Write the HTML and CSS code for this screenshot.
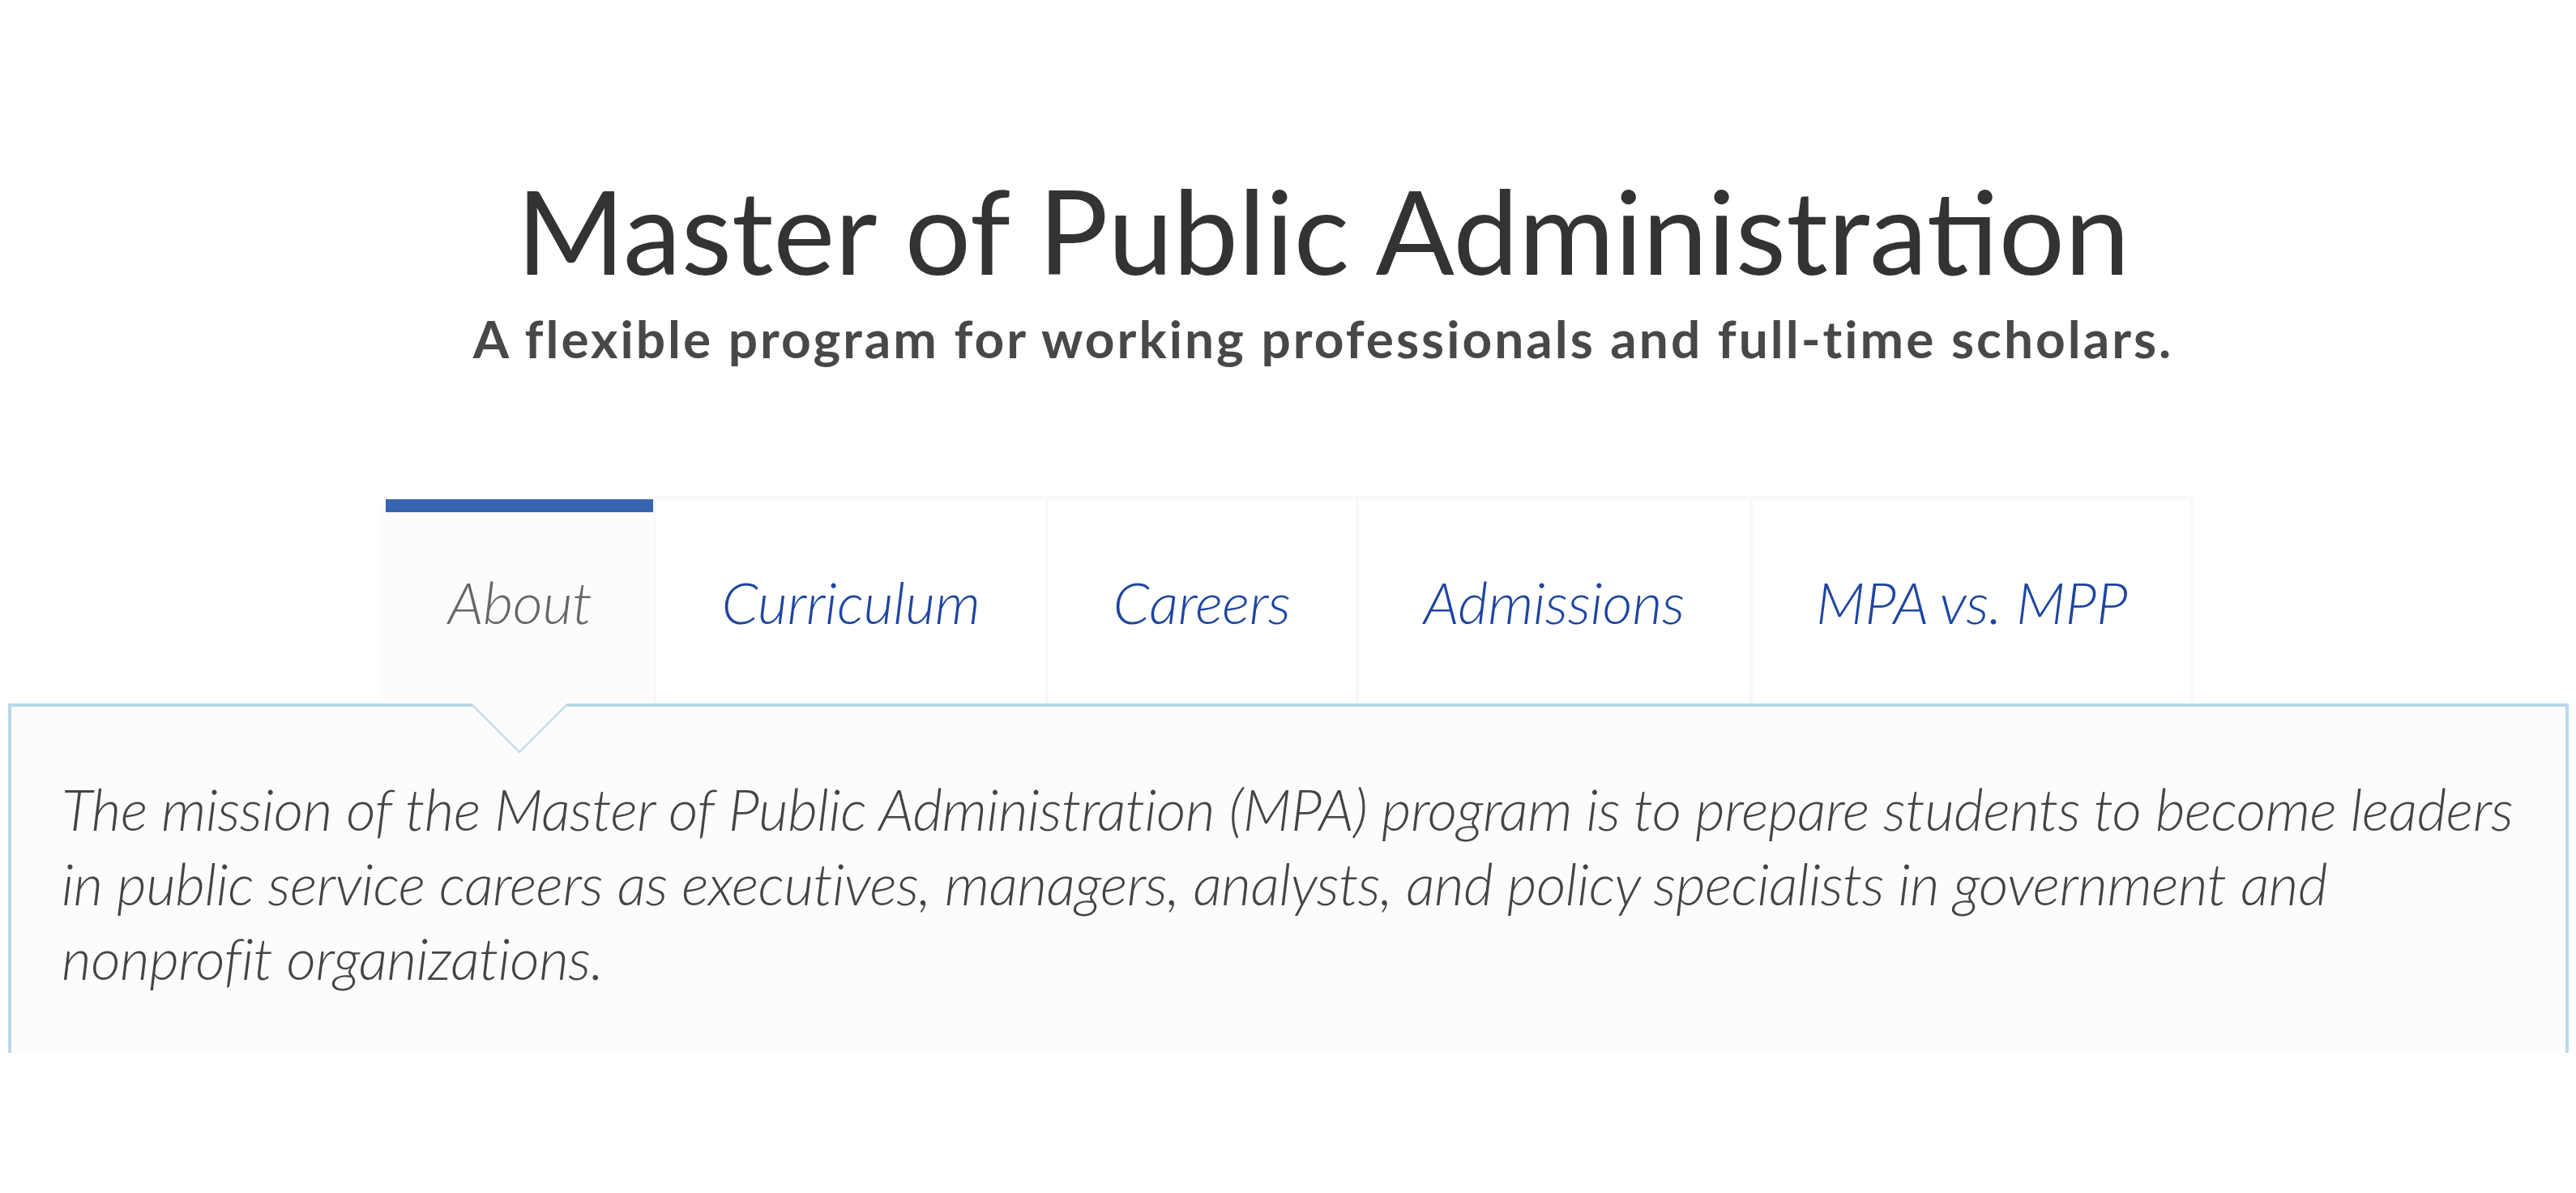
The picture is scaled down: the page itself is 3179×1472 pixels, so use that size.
FILE: index.html
```html
<!DOCTYPE html>
<html lang="en">
<head>
<meta charset="utf-8">
<title>Master of Public Administration</title>
<link rel="stylesheet" href="styles.css">
</head>
<body>
<header class="intro">
  <h1 class="title">Master of Public Administration</h1>
  <p class="subtitle">A flexible program for working professionals and full-time scholars.</p>
</header>
<nav class="tabs">
  <a class="tab tab-active" href="#about">About</a>
  <a class="tab" href="#curriculum">Curriculum</a>
  <a class="tab" href="#careers">Careers</a>
  <a class="tab" href="#admissions">Admissions</a>
  <a class="tab" href="#mpa-mpp">MPA vs. MPP</a>
</nav>
<section class="panel">
  <p class="mission">The mission of the Master of Public Administration (MPA) program is to prepare students to become leaders in public service careers as executives, managers, analysts, and policy specialists in government and nonprofit organizations.</p>
</section>
</body>
</html>
```
FILE: styles.css
```css
body {
  margin: 0;
  background: #fff;
  font-family: Lato, "Noto Sans", sans-serif;
}
.intro {
  padding: 197px 0 0 87px;
  text-align: center;
}
.title {
  margin: 0;
  font-size: 144px;
  font-weight: 400;
  line-height: 174px;
  color: #333;
}
.subtitle {
  margin: 8px 0 0;
  font-size: 64px;
  font-weight: 700;
  line-height: 77px;
  letter-spacing: 3px;
  color: #484848;
}
.tabs {
  display: flex;
  justify-content: center;
  margin-top: 156px;
}
.tab {
  display: block;
  padding: 83px 80px;
  border-top: 4px solid #f6f8fb;
  border-left: 4px solid #f6f8fb;
  background: #fff;
  font-size: 72px;
  font-style: italic;
  font-weight: 300;
  line-height: 86px;
  letter-spacing: -0.35px;
  color: #1e46a0;
  text-decoration: none;
  white-space: nowrap;
}
.tab:first-child {
  padding-left: 77px;
  padding-right: 76px;
}
.tab:last-child {
  padding-left: 78px;
  padding-right: 78px;
  border-right: 4px solid #f6f8fb;
}
.tab-active {
  position: relative;
  z-index: 1;
  color: #666;
  background: #fcfcfc;
  border-top-color: #fff;
  border-left-color: #fcfcfc;
  box-shadow: inset 0 16px 0 #3565ad;
}
.tab-active::after {
  content: "";
  position: absolute;
  left: 50%;
  bottom: -2px;
  box-sizing: border-box;
  width: 84px;
  height: 84px;
  background: #fcfcfc;
  border-right: 2px solid #b8d8ea;
  border-bottom: 2px solid #b8d8ea;
  transform: translate(-50%, 50%) rotate(45deg);
}
.panel {
  margin: 0 9px 0 10px;
  padding: 80px 40px 71px 62px;
  border: 4px solid #b8d8ea;
  border-bottom: 0;
  background: #fcfcfc;
}
.mission {
  margin: 0;
  font-size: 71px;
  font-style: italic;
  font-weight: 300;
  line-height: 92px;
  letter-spacing: -0.5px;
  color: #444;
}
```
